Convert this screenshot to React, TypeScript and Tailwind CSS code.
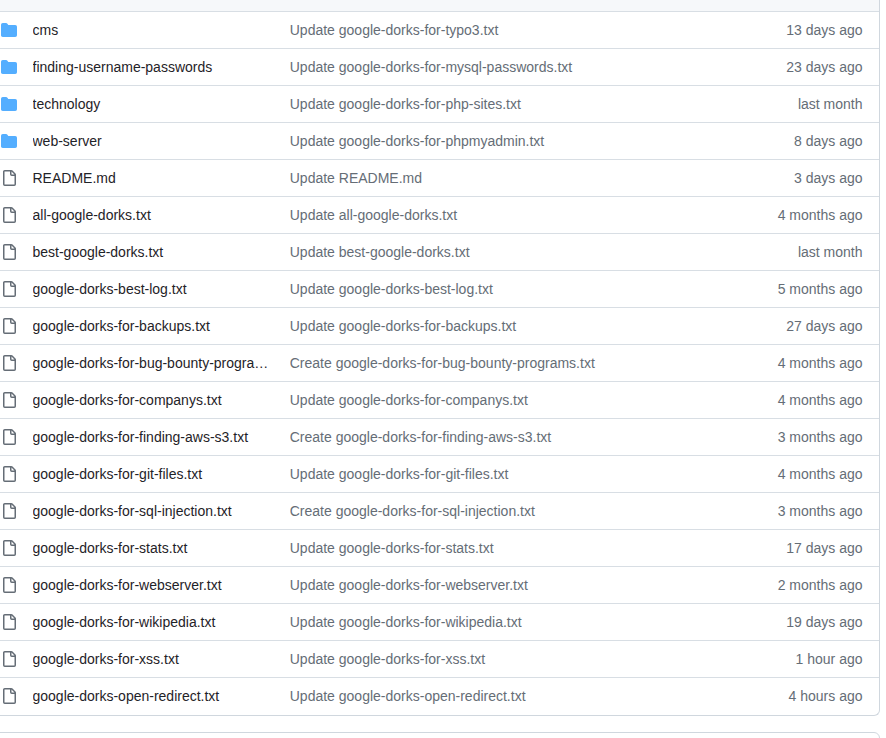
const files = [
  { name: 'cms', dir: true, msg: 'Update google-dorks-for-typo3.txt', age: '13 days ago' },
  { name: 'finding-username-passwords', dir: true, msg: 'Update google-dorks-for-mysql-passwords.txt', age: '23 days ago' },
  { name: 'technology', dir: true, msg: 'Update google-dorks-for-php-sites.txt', age: 'last month' },
  { name: 'web-server', dir: true, msg: 'Update google-dorks-for-phpmyadmin.txt', age: '8 days ago' },
  { name: 'README.md', msg: 'Update README.md', age: '3 days ago' },
  { name: 'all-google-dorks.txt', msg: 'Update all-google-dorks.txt', age: '4 months ago' },
  { name: 'best-google-dorks.txt', msg: 'Update best-google-dorks.txt', age: 'last month' },
  { name: 'google-dorks-best-log.txt', msg: 'Update google-dorks-best-log.txt', age: '5 months ago' },
  { name: 'google-dorks-for-backups.txt', msg: 'Update google-dorks-for-backups.txt', age: '27 days ago' },
  { name: 'google-dorks-for-bug-bounty-programs.txt', msg: 'Create google-dorks-for-bug-bounty-programs.txt', age: '4 months ago' },
  { name: 'google-dorks-for-companys.txt', msg: 'Update google-dorks-for-companys.txt', age: '4 months ago' },
  { name: 'google-dorks-for-finding-aws-s3.txt', msg: 'Create google-dorks-for-finding-aws-s3.txt', age: '3 months ago' },
  { name: 'google-dorks-for-git-files.txt', msg: 'Update google-dorks-for-git-files.txt', age: '4 months ago' },
  { name: 'google-dorks-for-sql-injection.txt', msg: 'Create google-dorks-for-sql-injection.txt', age: '3 months ago' },
  { name: 'google-dorks-for-stats.txt', msg: 'Update google-dorks-for-stats.txt', age: '17 days ago' },
  { name: 'google-dorks-for-webserver.txt', msg: 'Update google-dorks-for-webserver.txt', age: '2 months ago' },
  { name: 'google-dorks-for-wikipedia.txt', msg: 'Update google-dorks-for-wikipedia.txt', age: '19 days ago' },
  { name: 'google-dorks-for-xss.txt', msg: 'Update google-dorks-for-xss.txt', age: '1 hour ago' },
  { name: 'google-dorks-open-redirect.txt', msg: 'Update google-dorks-open-redirect.txt', age: '4 hours ago' },
];

function FolderIcon() {
  return (
    <svg viewBox="0 0 16 16" width="16" height="16" fill="#54aeff" className="shrink-0">
      <path d="M1.75 1A1.75 1.75 0 0 0 0 2.75v10.5C0 14.216.784 15 1.75 15h12.5A1.75 1.75 0 0 0 16 13.25v-8.5A1.75 1.75 0 0 0 14.25 3H7.5a.25.25 0 0 1-.2-.1l-.9-1.2C6.07 1.26 5.55 1 5 1H1.75Z" />
    </svg>
  );
}

function FileIcon() {
  return (
    <svg viewBox="0 0 16 16" width="16" height="16" fill="#656d76" className="shrink-0">
      <path d="M2 1.75C2 .784 2.784 0 3.75 0h6.586c.464 0 .909.184 1.237.513l2.914 2.914c.329.328.513.773.513 1.237v9.586A1.75 1.75 0 0 1 13.25 16h-9.5A1.75 1.75 0 0 1 2 14.25Zm1.75-.25a.25.25 0 0 0-.25.25v12.5c0 .138.112.25.25.25h9.5a.25.25 0 0 0 .25-.25V6h-2.75A1.75 1.75 0 0 1 9 4.25V1.5Zm6.75.062V4.25c0 .138.112.25.25.25h2.688l-.011-.013-2.914-2.914-.013-.011Z" />
    </svg>
  );
}

export default function App() {
  return (
    <div className="h-screen overflow-hidden bg-white font-['Liberation_Sans',Arial,sans-serif] text-sm">
      <div className="ml-[-15px] w-[895px]">
        <div className="rounded-b-md border border-t-0 border-[#d0d7de] pb-px">
          <div className="h-[11px] bg-[#f6f8fa]" />
          {files.map((f) => (
            <div key={f.name} className="flex h-[37px] items-center border-t border-[#d8dee4] pl-[15px] pr-[16.5px]">
              <div className="flex w-[16px] justify-center">{f.dir ? <FolderIcon /> : <FileIcon />}</div>
              <div className="ml-[15.5px] w-[236px] truncate text-[#1f2328]">{f.name}</div>
              <div className="ml-[21.25px] flex-1 truncate text-[#656d76]">{f.msg}</div>
              <div className="text-right whitespace-nowrap text-[#656d76]">{f.age}</div>
            </div>
          ))}
        </div>
        <div className="mt-4 h-[100px] rounded-t-md border border-[#d0d7de]" />
      </div>
    </div>
  );
}
